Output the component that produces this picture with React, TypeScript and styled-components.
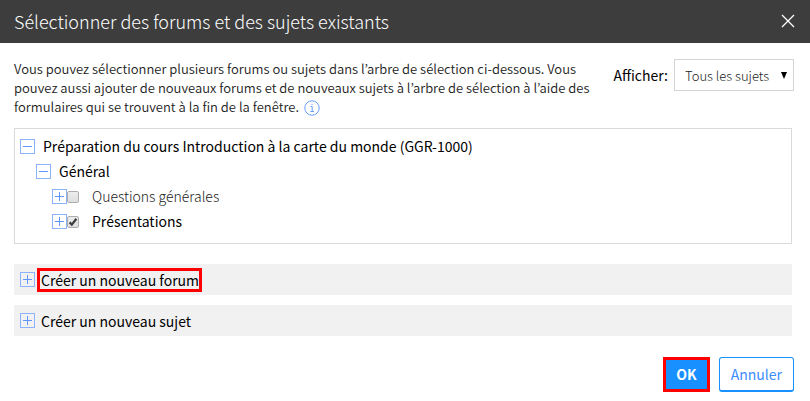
import React, { useState } from "react";
import styled, { createGlobalStyle } from "styled-components";

const GlobalStyle = createGlobalStyle`
  *, *::before, *::after { box-sizing: border-box; }
  body {
    margin: 0;
    background: #fff;
    color: #000;
    font-family: "Noto Sans CJK KR", "Noto Sans", sans-serif;
    font-size: 14px;
    line-height: 19px;
  }
  button, select, input { font: inherit; margin: 0; }
`;

const Header = styled.header`
  display: flex;
  align-items: center;
  justify-content: space-between;
  height: 43px;
  padding: 0 14px 2px;
  background: #3d3d3d;
  color: #fff;
`;

const Title = styled.h1`
  margin: 0;
  font-size: 18px;
  font-weight: 300;
  line-height: 24px;
`;

const CloseButton = styled.button`
  display: flex;
  padding: 1px;
  border: 0;
  background: none;
  color: #fff;
  cursor: pointer;
`;

const Content = styled.main`
  padding: 16px 16px 0 14px;
`;

const Top = styled.div`
  display: flex;
  justify-content: space-between;
  align-items: flex-start;
  gap: 16px;
`;

const Intro = styled.p`
  flex: 0 1 586px;
  margin: 0;
  color: #222;
  font-size: 13px;
  font-weight: 350;
`;

const InfoButton = styled.button`
  display: inline-flex;
  margin-left: 5px;
  padding: 0;
  border: 0;
  background: none;
  color: #6a9cff;
  vertical-align: -4px;
  cursor: pointer;
`;

const Filter = styled.div`
  display: flex;
  align-items: center;
  gap: 6px;
  flex-shrink: 0;
`;

const SelectWrap = styled.div`
  position: relative;
  display: flex;
  align-items: center;
`;

const Select = styled.select`
  appearance: none;
  width: 120px;
  height: 32px;
  padding: 0 20px 0 10px;
  border: 1px solid #d5d5d5;
  border-radius: 0;
  background: #fff;
  color: #222;
  font-size: 13px;
  font-weight: 300;
`;

const SelectArrow = styled.svg`
  position: absolute;
  right: 7px;
  pointer-events: none;
`;

const Tree = styled.div`
  margin: 12px 2px 0 0;
  padding: 5px 5px 9px;
  border: 1px solid #d9d9d9;
`;

const TreeRow = styled.div<{ $level: number }>`
  display: flex;
  align-items: center;
  height: 25px;
  padding-left: ${(p) => p.$level * 16}px;
`;

const ToggleButton = styled.button`
  display: flex;
  flex-shrink: 0;
  padding: 0;
  border: 0;
  background: none;
  color: #5f97ff;
  cursor: pointer;
`;

const TreeText = styled.span`
  margin-left: 8px;
`;

const CheckLabel = styled.label<{ $muted: boolean }>`
  display: flex;
  align-items: center;
  gap: 13px;
  color: ${(p) => (p.$muted ? "#222" : "#000")};
  font-weight: ${(p) => (p.$muted ? 300 : 400)};
`;

const CheckWrap = styled.span`
  position: relative;
  display: flex;
`;

const Checkbox = styled.input`
  appearance: none;
  width: 12px;
  height: 12px;
  border: 1px solid #adadad;
  border-radius: 2px;
  background: linear-gradient(#ededed, #dedede);
`;

const CheckMark = styled.svg`
  position: absolute;
  inset: 0;
  pointer-events: none;
`;

const Sections = styled.div`
  display: flex;
  flex-direction: column;
  gap: 10px;
  margin: 20px 2px 0 0;
`;

const Section = styled.section`
  display: flex;
  align-items: center;
  gap: 2px;
  height: 31px;
  padding-left: 6px;
  background: #f1f1f1;
`;

const SectionTitle = styled.h2<{ $highlighted?: boolean }>`
  margin: 0;
  padding: 0 0 0 1px;
  border: 3px solid ${(p) => (p.$highlighted ? "#f00" : "transparent")};
  font-size: 14px;
  font-weight: 400;
  line-height: 18px;
`;

const Actions = styled.footer`
  display: flex;
  justify-content: flex-end;
  gap: 9px;
  padding: 21px 16px 9px;
`;

const ActionButton = styled.button<{ $primary?: boolean }>`
  height: 35px;
  padding: ${(p) => (p.$primary ? "0 10px" : "0 11px")};
  border: ${(p) => (p.$primary ? "3px solid #f00" : "1px solid #1890ff")};
  border-bottom-width: ${(p) => (p.$primary ? 3 : 2)}px;
  border-radius: ${(p) => (p.$primary ? 0 : 3)}px;
  background: ${(p) => (p.$primary ? "#1890ff" : "#fff")};
  color: ${(p) => (p.$primary ? "#fff" : "#3b8dff")};
  font-weight: ${(p) => (p.$primary ? 700 : 400)};
  cursor: pointer;
`;

function Toggle({ open, label }: { open: boolean; label: string }) {
  return (
    <ToggleButton type="button" aria-expanded={open} aria-label={label}>
      <svg width="15" height="15" viewBox="0 0 15 15" fill="none" stroke="currentColor">
        <rect x="0.5" y="0.5" width="14" height="14" stroke="#8db3ff" />
        <path d={open ? "M3 7.5H12" : "M3 7.5H12M7.5 3V12"} />
      </svg>
    </ToggleButton>
  );
}

function Topic({ name, initial, muted }: { name: string; initial: boolean; muted: boolean }) {
  const [checked, setChecked] = useState(initial);
  return (
    <TreeRow $level={2}>
      <Toggle open={false} label={name} />
      <CheckLabel $muted={muted}>
        <CheckWrap>
          <Checkbox type="checkbox" checked={checked} onChange={() => setChecked(!checked)} />
          {checked && (
            <CheckMark width="12" height="12" viewBox="0 0 12 12" fill="none">
              <path d="M2.6 6.4L4.8 8.6L9.4 2.8" stroke="#3c3c3c" strokeWidth="2.2" />
            </CheckMark>
          )}
        </CheckWrap>
        {name}
      </CheckLabel>
    </TreeRow>
  );
}

export default function App() {
  return (
    <>
      <GlobalStyle />
      <Header>
        <Title>Sélectionner des forums et des sujets existants</Title>
        <CloseButton type="button" aria-label="Fermer">
          <svg width="14" height="14" viewBox="0 0 14 14" fill="none" stroke="currentColor" strokeWidth="1.3">
            <path d="M1 1L13 13M13 1L1 13" />
          </svg>
        </CloseButton>
      </Header>
      <Content>
        <Top>
          <Intro>
            Vous pouvez sélectionner plusieurs forums ou sujets dans l’arbre de sélection ci-dessous. Vous
            pouvez aussi ajouter de nouveaux forums et de nouveaux sujets à l’arbre de sélection à l’aide des
            formulaires qui se trouvent à la fin de la fenêtre.
            <InfoButton type="button" aria-label="Information">
              <svg width="16" height="16" viewBox="0 0 16 16" fill="none" stroke="currentColor">
                <circle cx="8" cy="8" r="7.2" />
                <path d="M6.5 6.5H8.2V11.5M6.3 11.5H10M8 3.8V5" />
              </svg>
            </InfoButton>
          </Intro>
          <Filter>
            <label htmlFor="filter">Afficher:</label>
            <SelectWrap>
              <Select id="filter" defaultValue="all">
                <option value="all">Tous les sujets</option>
              </Select>
              <SelectArrow width="6" height="7" viewBox="0 0 6 7">
                <path d="M0 0H6L3 7Z" fill="#000" />
              </SelectArrow>
            </SelectWrap>
          </Filter>
        </Top>
        <Tree>
          <TreeRow $level={0}>
            <Toggle open label="Préparation du cours" />
            <TreeText>Préparation du cours Introduction à la carte du monde (GGR-1000)</TreeText>
          </TreeRow>
          <TreeRow $level={1}>
            <Toggle open label="Général" />
            <TreeText>Général</TreeText>
          </TreeRow>
          <Topic name="Questions générales" initial={false} muted />
          <Topic name="Présentations" initial muted={false} />
        </Tree>
        <Sections>
          <Section>
            <Toggle open={false} label="Créer un nouveau forum" />
            <SectionTitle $highlighted>Créer un nouveau forum</SectionTitle>
          </Section>
          <Section>
            <Toggle open={false} label="Créer un nouveau sujet" />
            <SectionTitle>Créer un nouveau sujet</SectionTitle>
          </Section>
        </Sections>
      </Content>
      <Actions>
        <ActionButton type="button" $primary>OK</ActionButton>
        <ActionButton type="button">Annuler</ActionButton>
      </Actions>
    </>
  );
}
